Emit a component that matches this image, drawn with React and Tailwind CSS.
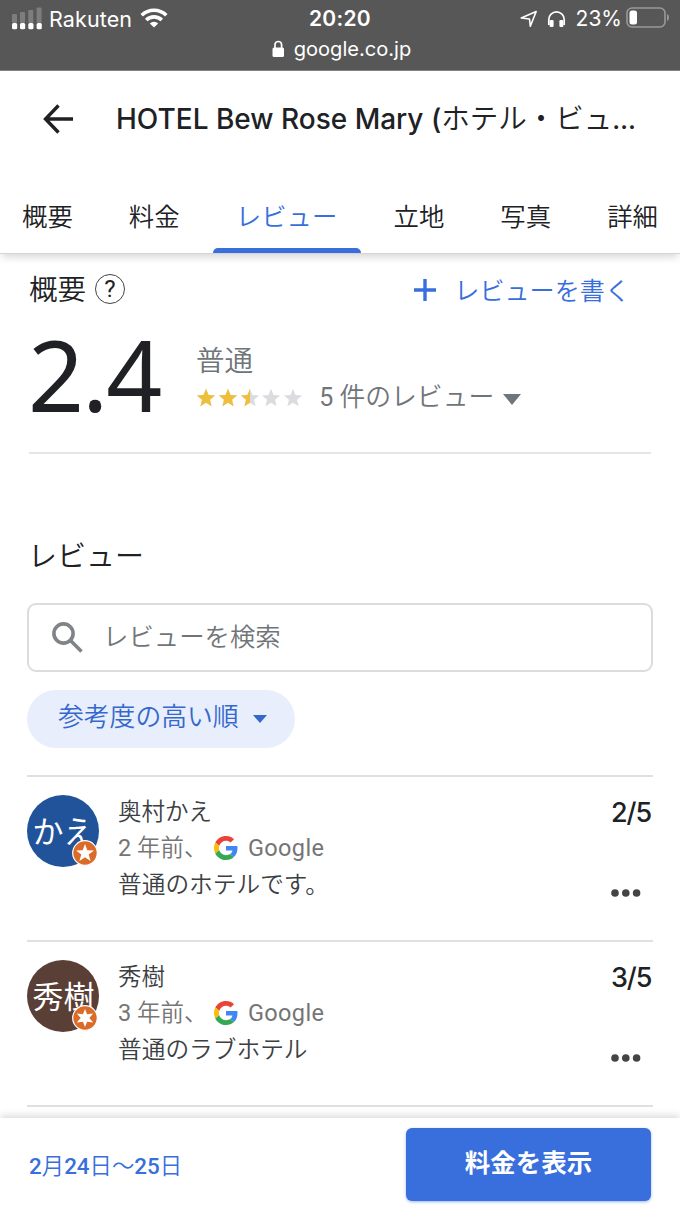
import React from "react";

const JP = "font-['Noto_Sans_CJK_JP',sans-serif]";
const ROBOTO = "font-['Roboto','Noto_Sans_CJK_JP',sans-serif]";
const INTER = "font-['Inter','Noto_Sans_CJK_JP',sans-serif]";

function SignalIcon() {
  return (
    <svg width="31" height="24" viewBox="0 0 31 24">
      <g fill="#7d7d7d">
        <rect x="0" y="7" width="5" height="9" rx="1" />
        <rect x="8" y="5" width="5" height="11" rx="1" />
        <rect x="16.300" y="3" width="5" height="13" rx="1" />
        <rect x="24.600" y="0.500" width="5" height="15.500" rx="1" />
      </g>
      <g fill="#fff">
        <rect x="0" y="16" width="5.200" height="6.300" rx="1.500" />
        <rect x="8" y="16" width="5.200" height="6.300" rx="1.500" />
        <rect x="16.300" y="16" width="5.200" height="6.300" rx="1.500" />
        <rect x="24.600" y="16" width="5.200" height="6.300" rx="1.500" />
      </g>
    </svg>
  );
}

function WifiIcon() {
  return (
    <svg width="28" height="20" viewBox="0 0 28 20" fill="none" stroke="#fff" strokeWidth="3.600">
      <path d="M1.700 7.300a17.600 17.600 0 0 1 24.600 0" />
      <path d="M6.200 12a11.200 11.200 0 0 1 15.600 0" />
      <path d="M14 19.600l-4.200-4.200a6.200 6.200 0 0 1 8.400 0z" fill="#fff" stroke="none" />
    </svg>
  );
}

function StatusBar() {
  return (
    <div className={`${INTER} h-[71px] border-b border-[#858585] bg-[#575757] text-white`}>
      <div className="grid h-[37px] grid-cols-3 items-center pl-3 pr-[10px]">
        <div className="flex items-center">
          <SignalIcon />
          <span className="ml-[6px] text-[21.500px] leading-[24px] tracking-[0.100px]">Rakuten</span>
          <span className="-mt-[2px] ml-[8px]"><WifiIcon /></span>
        </div>
        <span className="pr-[2px] text-center text-[21px] font-semibold leading-[24px] tracking-[0.300px]">20:20</span>
        <div className="flex items-center justify-end whitespace-nowrap">
          <svg width="18" height="18" viewBox="0 0 18 18" fill="none" stroke="#fff" strokeWidth="1.600" strokeLinejoin="round">
            <path d="M1.200 8L16.200 1.500 10.300 16.200 9.500 9z" />
          </svg>
          <svg className="ml-[9px]" width="19" height="18" viewBox="0 0 19 18">
            <path d="M1.800 15V9.500a7.700 7.700 0 0 1 15.400 0V15" fill="none" stroke="#fff" strokeWidth="1.700" />
            <rect x="2.600" y="10" width="4" height="7" rx="1.200" fill="#fff" />
            <rect x="12.400" y="10" width="4" height="7" rx="1.200" fill="#fff" />
          </svg>
          <span className="ml-[10px] text-[21px] leading-[24px]">23%</span>
          <svg className="-mt-[2px] ml-1" width="44" height="21" viewBox="0 0 44 21">
            <rect x="1" y="1" width="38" height="19" rx="5" fill="none" stroke="#999" strokeWidth="1.600" />
            <rect x="3.500" y="3.500" width="7.500" height="14" rx="2.500" fill="#fff" />
            <path d="M41 7v7c1.300-.6 2-2 2-3.500S42.300 7.600 41 7z" fill="#999" />
          </svg>
        </div>
      </div>
      <div className="flex items-center justify-center gap-[9px] pl-[3px]">
        <svg width="13" height="18" viewBox="0 0 13 18">
          <rect x="0.500" y="7.500" width="11.500" height="9.500" rx="1.500" fill="#fff" />
          <path d="M3 8V4.800a3.300 3.300 0 0 1 6.600 0V8" fill="none" stroke="#fff" strokeWidth="1.700" />
        </svg>
        <span className="text-[20.100px] leading-[24px]">google.co.jp</span>
      </div>
    </div>
  );
}

const tabs = ["概要", "料金", "レビュー", "立地", "写真", "詳細"];

function Header() {
  return (
    <header className="relative h-[183px] border-b border-[#d5d5d5] bg-white shadow-[0_5px_8px_-2px_rgba(0,0,0,0.160)]">
      <div className="flex h-[96px] items-center pl-[43px]">
        <svg width="31" height="30" viewBox="0 0 31 30" fill="none" stroke="#202124" strokeWidth="3.400">
          <path d="M15.500 1.500L2.500 15l13 13.500M2.500 15H30" />
        </svg>
        <h1 className={`${INTER} ml-[42px] whitespace-nowrap text-[28px] font-medium leading-[32px] text-[#202124]`}>
          HOTEL Bew Rose Mary (<span className="text-[28.500px] font-[350]">ホテル・ビュ</span><span className="text-[26px]">…</span>
        </h1>
      </div>
      <nav className={`${JP} flex h-[86px] gap-[56px] pl-[22px] text-[25.400px] font-[350] leading-[36px] text-[#202124]`}>
        {tabs.map((t) =>
          t === "レビュー" ? (
            <div key={t} className="-mx-[23px] flex w-[148px] flex-col items-center justify-between pt-[30px] text-[#386fdc]">
              <span className="whitespace-nowrap">{t}</span>
              <span className="h-[5px] w-full rounded-t-[5px] bg-[#386fdc]" />
            </div>
          ) : (
            <span key={t} className="whitespace-nowrap pt-[30px]">{t}</span>
          )
        )}
      </nav>
    </header>
  );
}

const STAR = "M10 .8l2.500 6.100 6.600.5-5.100 4.300 1.600 6.500L10 14.700l-5.600 3.500L6 11.700.9 7.400l6.600-.5z";

function Stars() {
  return (
    <div className="mt-[2px] flex gap-[1.800px]">
      {[1, 1, 0.5, 0, 0].map((fill, i) => (
        <svg key={i} width="20" height="20" viewBox="0 0 20 20">
          <path d={STAR} fill="#dadce0" />
          {fill === 1 && <path d={STAR} fill="#efbe3a" />}
          {fill === 0.5 && <path d="M10 .8V14.700l-5.600 3.500L6 11.700.9 7.400l6.600-.5z" fill="#efbe3a" />}
        </svg>
      ))}
    </div>
  );
}

function Summary() {
  return (
    <section className="mx-[29px] h-[200px] border-b-2 border-[#e4e5e7] pt-[15px]">
      <div className="flex h-[40px] items-center justify-between pr-[21px]">
        <div className="-mt-[3px] flex items-center gap-[9px]">
          <h2 className={`${JP} text-[28.500px] font-[350] leading-[36px] text-[#202124]`}>概要</h2>
          <span className={`${ROBOTO} mt-[3px] flex size-[30px] items-center justify-center rounded-full border-[1.500px] border-[#444] text-[24px] leading-none text-[#202124]`}>?</span>
        </div>
        <div className="flex items-center gap-[18px] text-[#386fdc]">
          <svg className="mt-px" width="22" height="22" viewBox="0 0 22 22" stroke="#386fdc" strokeWidth="3.400"><path d="M11 0v22M0 11h22" /></svg>
          <span className={`${JP} text-[25.100px] font-[350] leading-[36px]`}>レビューを書く</span>
        </div>
      </div>
      <div className="flex h-[126px]">
        <div className="-ml-px w-[168px] whitespace-nowrap font-['Noto_Sans',sans-serif] text-[98px] font-[450] leading-[131px] tracking-[-2px] text-[#202124]">2.4</div>
        <div className="pt-[32px] text-[#70757a]">
          <div className={`${JP} text-[28.500px] font-[350] leading-[36px]`}>普通</div>
          <div className="flex h-[40px] items-center">
            <Stars />
            <span className={`${ROBOTO} ml-[16px] whitespace-nowrap text-[25px] leading-[36px]`}>5 <span className="text-[25.800px] font-[350]">件のレビュー</span></span>
            <svg className="ml-[9px] mt-[5px]" width="18" height="11" viewBox="0 0 18 11"><path d="M0 0h18L9 11z" fill="#70757a" /></svg>
          </div>
        </div>
      </div>
    </section>
  );
}

function GoogleMark() {
  return (
    <svg width="24" height="24" viewBox="0 0 48 48">
      <path fill="#EA4335" d="M24 9.500c3.540 0 6.710 1.220 9.210 3.600l6.850-6.850C35.900 2.380 30.470 0 24 0 14.620 0 6.510 5.380 2.560 13.220l7.980 6.190C12.430 13.720 17.740 9.500 24 9.500z" />
      <path fill="#4285F4" d="M46.980 24.550c0-1.570-.15-3.090-.38-4.550H24v9.020h12.940c-.58 2.960-2.260 5.480-4.780 7.180l7.730 6c4.510-4.180 7.090-10.360 7.090-17.650z" />
      <path fill="#FBBC05" d="M10.530 28.590c-.48-1.450-.76-2.990-.76-4.590s.27-3.140.76-4.590l-7.980-6.190C.92 16.460 0 20.120 0 24c0 3.880.92 7.540 2.560 10.780l7.970-6.190z" />
      <path fill="#34A853" d="M24 48c6.480 0 11.930-2.130 15.890-5.810l-7.730-6c-2.150 1.450-4.920 2.300-8.160 2.300-6.260 0-11.570-4.220-13.470-9.910l-7.980 6.190C6.510 42.620 14.620 48 24 48z" />
    </svg>
  );
}

const FIVE = "M13 4l2.300 6.300 6.700.2-5.300 4.100 1.900 6.500L13 17.300l-5.600 3.800 1.900-6.500L4 10.500l6.700-.2z";
const SIX = "M13 4l2.100 5.300 6.100-.8L17.300 13l3.900 4.500-6.100-.8L13 22l-2.100-5.300-6.100.8L8.700 13 4.800 8.500l6.100.8z";

function Review({ name, initials, color, star, age, text, score }) {
  return (
    <article className={`${ROBOTO} flex h-[165px] border-b-2 border-[#dfe0e2] pt-[18px]`}>
      <div className={`${JP} relative flex size-[72px] items-center justify-center rounded-full text-[31px] leading-[36px] text-white ${color}`}>
        <span className="whitespace-nowrap pb-[3px] pl-px">{initials}</span>
        <svg className="absolute bottom-px right-px" width="26" height="26" viewBox="0 0 26 26">
          <circle cx="13" cy="13" r="12.300" fill="#db6b29" stroke="#fff" strokeWidth="1.200" />
          <path d={star} fill="#fff" />
        </svg>
      </div>
      <div className="ml-[19px] grow text-[23.500px] font-[350] leading-[36px] text-[#3c4043]">
        <div className="-mt-px h-[36px]">{name}</div>
        <div className="flex h-[36px] items-center text-[#757575]">
          <span className="w-[96px] whitespace-nowrap"><span className="font-normal">{age}</span> 年前、</span>
          <GoogleMark />
          <span className="ml-[10px] font-normal tracking-[0.350px]">Google</span>
        </div>
        <div className={`${JP} -mt-px text-[23.700px]`}>{text}</div>
      </div>
      <div className="flex w-[42px] flex-col pt-px">
        <span className={`${INTER} whitespace-nowrap text-[27px] font-medium leading-[34px] tracking-[-1.100px] text-[#202124]`}>{score}</span>
        <svg className="mt-[59px]" width="30" height="8" viewBox="0 0 30 8" fill="#444">
          <circle cx="4" cy="4" r="3.800" /><circle cx="14.800" cy="4" r="3.800" /><circle cx="25.600" cy="4" r="3.800" />
        </svg>
      </div>
    </article>
  );
}

function Reviews() {
  return (
    <section className="px-[27px] pt-[80px]">
      <h2 className={`${JP} pl-[1px] text-[29px] font-[350] leading-[40px] text-[#202124]`}>レビュー</h2>
      <div className="mt-[29px] flex h-[69px] w-[626px] items-center rounded-[9px] border-2 border-[#dadcdf] pl-[23px]">
        <svg className="-mt-px" width="31" height="31" viewBox="0 0 31 31" fill="none" stroke="#808387" strokeWidth="3.600">
          <circle cx="11.500" cy="11.500" r="9.600" /><path d="M18.500 18.500L29.500 29.500" />
        </svg>
        <span className={`${JP} ml-[20px] pb-[5px] text-[25.400px] font-[350] leading-[36px] text-[#70757a]`}>レビューを検索</span>
      </div>
      <button className="mt-[18px] flex h-[58px] w-[268px] items-center rounded-full bg-[#e8eefc] pl-[31px] text-[#3468cd]">
        <span className={`${JP} whitespace-nowrap pb-[8px] text-[25.800px] font-[350] leading-[36px]`}>参考度の高い順</span>
        <svg className="ml-[14px]" width="14" height="8" viewBox="0 0 14 8"><path d="M0 0h14L7 8z" fill="#3468cd" /></svg>
      </button>
      <div className="mt-[27px] border-t-2 border-[#dfe0e2]">
        <Review name="奥村かえ" initials="かえ" color="bg-[#20539a]" star={FIVE} age="2" text="普通のホテルです。" score="2/5" />
        <Review name="秀樹" initials="秀樹" color="bg-[#593f36]" star={SIX} age="3" text="普通のラブホテル" score="3/5" />
      </div>
    </section>
  );
}

export default function App() {
  return (
    <div className="flex h-[1209px] w-[680px] flex-col overflow-hidden bg-white">
      <StatusBar />
      <Header />
      <main className="h-[864px] shrink-0">
        <Summary />
        <Reviews />
      </main>
      <footer className="relative flex h-[91px] shrink-0 items-start justify-between bg-white pl-[29px] pr-[29px] pt-[10px] shadow-[0_-3px_7px_rgba(0,0,0,0.130)]">
        <span className={`${ROBOTO} mt-[20px] whitespace-nowrap text-[22.400px] font-medium leading-[36px] text-[#386fdc]`}>
          2<span className="font-[350]">月</span>24<span className="font-[350]">日〜</span>25<span className="font-[350]">日</span>
        </span>
        <button className={`${JP} h-[73px] w-[245px] rounded-[6px] bg-[#386fdc] pb-[8px] text-[25.500px] font-bold leading-[36px] text-white shadow-[0_1px_3px_rgba(56,111,220,0.500)]`}>料金を表示</button>
      </footer>
    </div>
  );
}
